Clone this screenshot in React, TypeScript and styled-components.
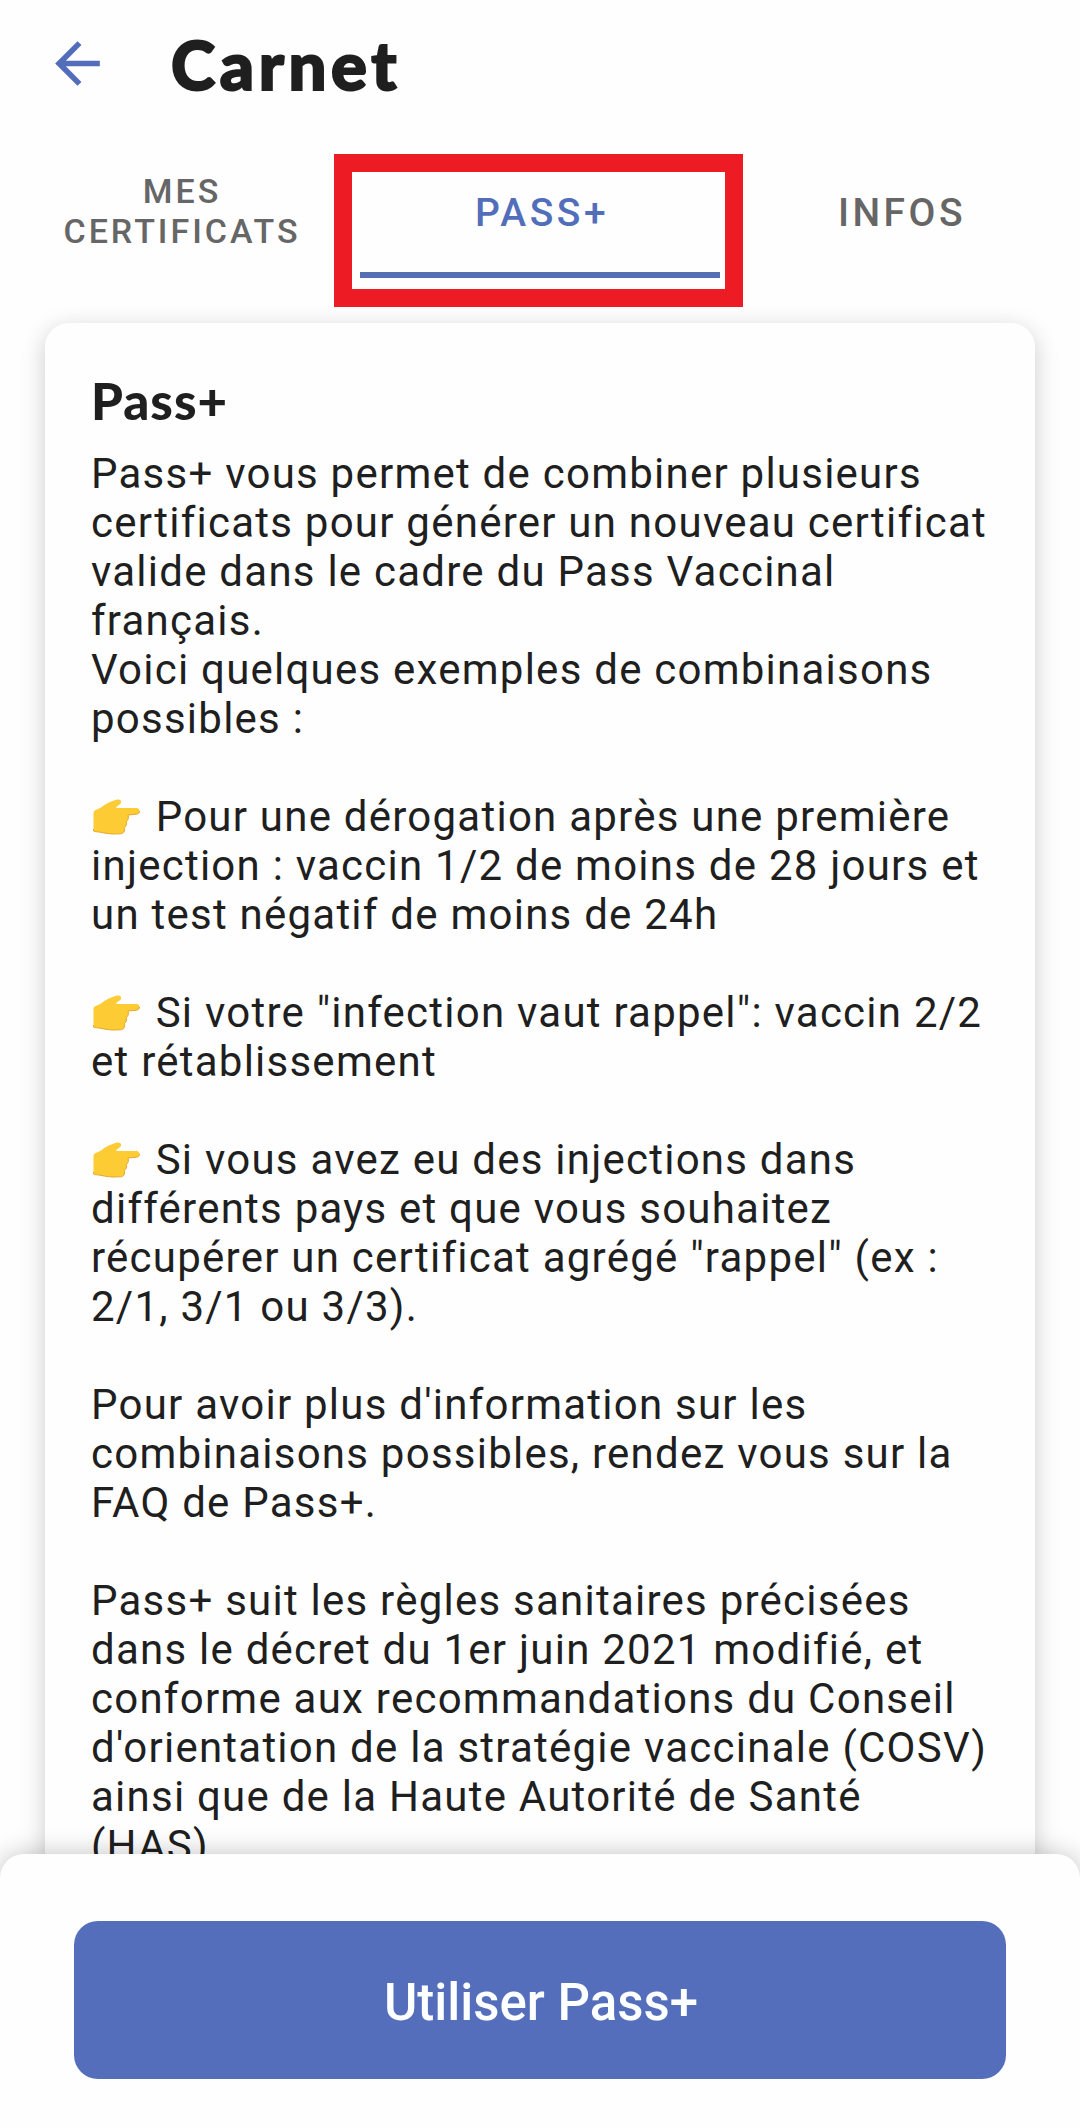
import React from "react";
import styled, { createGlobalStyle } from "styled-components";

const GlobalStyle = createGlobalStyle`
  * { box-sizing: border-box; }
  html, body { margin: 0; padding: 0; background: #fefefe; }
  body { font-family: Roboto, "Noto Sans", sans-serif; color: #1f1f1f; }
`;

const Screen = styled.div`
  display: flex;
  flex-direction: column;
  width: 1080px;
  height: 2128px;
  overflow: hidden;
  background: #fefefe;
`;

const Header = styled.header`
  display: flex;
  align-items: center;
  height: 127px;
  padding-left: 44px;
  flex: none;
`;

const BackButton = styled.button`
  display: flex;
  padding: 0;
  border: 0;
  background: none;
  color: #526ebb;
  svg { display: block; width: 67px; height: 67px; }
`;

const Title = styled.h1`
  margin: 0 0 0 60px;
  font-family: Lato, sans-serif;
  font-weight: 900;
  font-size: 67px;
  line-height: 80px;
  letter-spacing: 4.6px;
  -webkit-text-stroke: 2px currentColor;
`;

const Tabs = styled.nav`
  display: flex;
  height: 151px;
  flex: none;
`;

const Tab = styled.button<{ $active?: boolean; $small?: boolean }>`
  position: relative;
  display: flex;
  align-items: center;
  justify-content: center;
  flex: 1;
  padding: ${(p) => (p.$small ? 23 : 27)}px 0 0 4px;
  margin: 0;
  border: 0;
  border-bottom: 6px solid ${(p) => (p.$active ? "#566fb2" : "transparent")};
  background: none;
  font-family: Roboto, sans-serif;
  font-weight: 500;
  font-size: ${(p) => (p.$small ? 34 : 39)}px;
  line-height: ${(p) => (p.$small ? 40 : 47)}px;
  letter-spacing: ${(p) => (p.$small ? 3 : 3.5)}px;
  color: ${(p) => (p.$active ? "#526ebb" : "#666")};
`;

const Highlight = styled.span`
  position: absolute;
  left: -26px;
  top: 27px;
  width: 409px;
  height: 153px;
  border: 18px solid #ed1c24;
`;

const Content = styled.main`
  flex: 1;
  min-height: 0;
  padding: 45px 45px 0;
`;

const Card = styled.section`
  height: 1700px;
  padding: 48px 47px 0 46px;
  border-radius: 24px;
  background: #fefefe;
  box-shadow: 0 6px 25px rgba(0, 0, 0, 0.2);
`;

const CardTitle = styled.h2`
  margin: 0 0 18px;
  font-family: Lato, sans-serif;
  font-weight: 900;
  font-size: 51px;
  line-height: 60px;
  letter-spacing: 1px;
`;

const Copy = styled.p`
  margin: 0 -20px 49px 0;
  font-size: 42px;
  line-height: 49px;
  letter-spacing: 1.24px;
  white-space: pre-line;
`;

const Hand = styled.svg`
  display: inline-block;
  width: 48px;
  height: 38px;
  margin: -3px 3px -3px 2px;
  vertical-align: -3px;
`;

const Sheet = styled.footer`
  position: relative;
  display: flex;
  flex: none;
  height: 274px;
  padding: 67px 74px 49px;
  border-radius: 24px 24px 0 0;
  background: #fefefe;
  box-shadow: 0 0 26px rgba(0, 0, 0, 0.24);
`;

const PrimaryButton = styled.button`
  flex: 1;
  border: 0;
  border-radius: 24px;
  padding: 5px 0 0 2px;
  background: #546ebc;
  color: #fcfeff;
  font-family: Roboto, sans-serif;
  font-weight: 500;
  font-size: 51px;
`;

function PointingHand() {
  return (
    <Hand viewBox="0 0 48 38" aria-label="👉">
      <path d="M.5 14C.5 11 4 11 8 8.500C12 5.500 18 2 24 .6C28-.4 29.500 3.500 26.500 5.500C24.500 6.800 23.500 7.500 23 9H43.500C47.500 9 47.500 15 43.500 15.200L35 16C36 19 35 21 33.500 22.500C34 25 33 27.500 31.500 28.500C32 32 31 34.800 27.500 34.800L20 35C14 35 8 33 1.500 32.500Q.5 32.500.5 31z" fill="#fdcb33" />
      <path d="M.5 30V31Q.5 32.500 1.500 32.500C8 33 14 35 20 35L27.500 34.800C31 34.800 32 32 31.500 28.500C33 27.500 34 25 33.500 22.500C35 21 36 19 35 16L43.500 15.200C45.500 15.100 46.500 13.600 46.500 12" fill="none" stroke="#e5a92d" strokeWidth="1" />
    </Hand>
  );
}

export default function App() {
  return (
    <Screen>
      <GlobalStyle />
      <Header>
        <BackButton aria-label="Retour">
          <svg viewBox="0 0 24 24" fill="currentColor">
            <path d="M20 11H7.83l5.59-5.59L12 4l-8 8 8 8 1.41-1.41L7.83 13H20v-2z" />
          </svg>
        </BackButton>
        <Title>Carnet</Title>
      </Header>
      <Tabs>
        <Tab $small>MES<br />CERTIFICATS</Tab>
        <Tab $active>PASS+<Highlight /></Tab>
        <Tab>INFOS</Tab>
      </Tabs>
      <Content>
        <Card>
          <CardTitle>Pass+</CardTitle>
          <Copy>{`Pass+ vous permet de combiner plusieurs
certificats pour générer un nouveau certificat
valide dans le cadre du Pass Vaccinal
français.
Voici quelques exemples de combinaisons
possibles :`}</Copy>
          <Copy><PointingHand />{` Pour une dérogation après une première
injection : vaccin 1/2 de moins de 28 jours et
un test négatif de moins de 24h`}</Copy>
          <Copy><PointingHand />{` Si votre "infection vaut rappel": vaccin 2/2
et rétablissement`}</Copy>
          <Copy><PointingHand />{` Si vous avez eu des injections dans
différents pays et que vous souhaitez
récupérer un certificat agrégé "rappel" (ex :
2/1, 3/1 ou 3/3).`}</Copy>
          <Copy>{`Pour avoir plus d'information sur les
combinaisons possibles, rendez vous sur la
FAQ de Pass+.`}</Copy>
          <Copy>{`Pass+ suit les règles sanitaires précisées
dans le décret du 1er juin 2021 modifié, et
conforme aux recommandations du Conseil
d'orientation de la stratégie vaccinale (COSV)
ainsi que de la Haute Autorité de Santé
(HAS)`}</Copy>
        </Card>
      </Content>
      <Sheet>
        <PrimaryButton>Utiliser Pass+</PrimaryButton>
      </Sheet>
    </Screen>
  );
}
